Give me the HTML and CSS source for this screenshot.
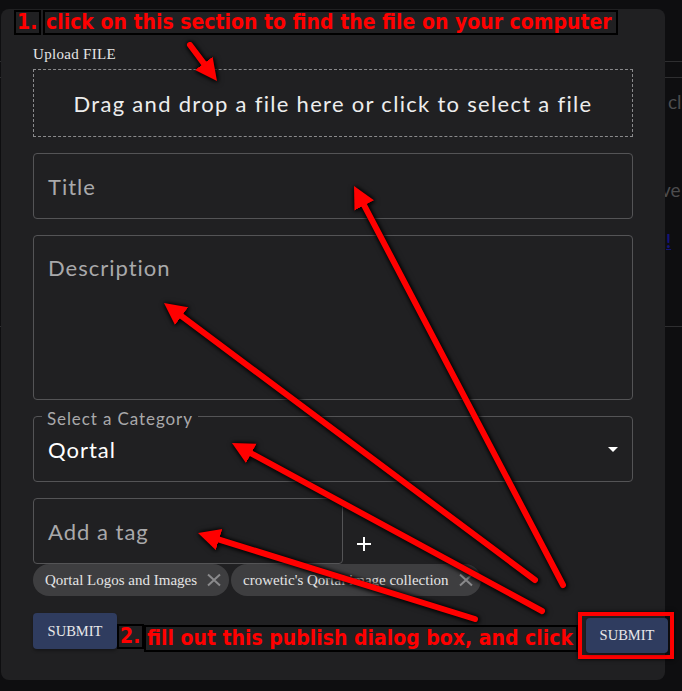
FILE: index.html
```html
<!DOCTYPE html>
<html lang="en">
<head>
<meta charset="utf-8">
<title>Publish</title>
<link rel="stylesheet" href="styles.css">
</head>
<body>
<div class="page">
  <div class="page-bar"></div>
  <div class="page-body">
    <p class="page-t1">cl</p>
    <p class="page-t2">ve</p>
    <a class="page-link" href="#">!</a>
  </div>
  <div class="page-rule"></div>
</div>

<div class="dialog">
  <label class="upload-label">Upload FILE</label>
  <div class="dropzone">Drag and drop a file here or click to select a file</div>
  <div class="field field-title"><span class="placeholder">Title</span></div>
  <div class="field field-desc"><span class="placeholder">Description</span></div>
  <div class="field field-select">
    <span class="legend">Select a Category</span>
    <span class="value">Qortal</span>
    <svg class="caret" width="10" height="5" viewBox="0 0 10 5"><path d="M0 0 L10 0 L5 5 Z" fill="#fff"/></svg>
  </div>
  <div class="tag-row">
    <div class="field field-tag"><span class="placeholder">Add a tag</span></div>
    <button class="add-btn" type="button">
      <svg width="14" height="14" viewBox="0 0 14 14"><path d="M7 0 V14 M0 7 H14" stroke="#fff" stroke-width="2"/></svg>
    </button>
  </div>
  <div class="chips">
    <span class="chip"><span class="chip-label">Qortal Logos and Images</span><svg class="chip-x" width="22" height="22" viewBox="0 0 22 22"><path d="M5 5.5 L17 16.5 M17 5.5 L5 16.5" stroke="#8a8a8c" stroke-width="2"/></svg></span>
    <span class="chip"><span class="chip-label">crowetic's Qortal image collection</span><svg class="chip-x" width="22" height="22" viewBox="0 0 22 22"><path d="M5 5.5 L17 16.5 M17 5.5 L5 16.5" stroke="#8a8a8c" stroke-width="2"/></svg></span>
  </div>
  <div class="actions"><button class="submit" type="button">SUBMIT</button></div>
</div>

<div class="note note-top">
  <span class="note-box note-num">1.</span>
  <span class="note-box note-text">click on this section to find the file on your computer</span>
</div>
<div class="note note-bottom">
  <span class="note-box note-num">2.</span>
  <span class="note-box note-text">fill out this publish dialog box, and click</span>
</div>
<div class="highlight"><button class="submit submit-copy" type="button">SUBMIT</button></div>

<svg class="arrows" width="682" height="691" viewBox="0 0 682 691">
  <defs>
    <marker id="head" markerUnits="userSpaceOnUse" markerWidth="24" markerHeight="24" refX="10" refY="11" orient="auto">
      <path d="M0 0 L22 11 L0 22 Z" fill="#ff0000"/>
    </marker>
  </defs>
  <g stroke="#ff0000" stroke-width="6" stroke-linecap="round" fill="none">
    <line x1="190" y1="45" x2="209.8" y2="71.4" marker-end="url(#head)"/>
    <line x1="563" y1="585" x2="359.6" y2="196.6" marker-end="url(#head)"/>
    <line x1="535" y1="580" x2="173.6" y2="310.2" marker-end="url(#head)"/>
    <line x1="542" y1="611" x2="242.5" y2="448.7" marker-end="url(#head)"/>
    <line x1="475" y1="619" x2="209.5" y2="536.6" marker-end="url(#head)"/>
  </g>
</svg>
</body>
</html>
```

FILE: styles.css
```css
html, body {
  margin: 0;
  padding: 0;
}
body {
  width: 682px;
  height: 691px;
  overflow: hidden;
  position: relative;
  background: #0e0e10;
  font-family: Lato, "Open Sans", sans-serif;
}

/* background page */
.page {
  padding-top: 61px;
}
.page-bar {
  height: 15px;
  border-top: 1px solid #2e2e30;
  border-bottom: 1px solid #2e2e30;
}
.page-body {
  height: 248px;
  padding-left: 660px;
  display: flex;
  flex-direction: column;
}
.page-t1 {
  margin: 12px 0 0 8px;
  font-size: 19px;
  line-height: 24px;
  color: #4c4c4e;
}
.page-t2 {
  margin: 64px 0 0 1px;
  font-size: 19px;
  line-height: 24px;
  color: #4c4c4e;
}
.page-link {
  margin: 28px 0 0 6px;
  font-size: 18px;
  font-weight: bold;
  color: #14147a;
}
.page-rule {
  border-top: 1px solid #2e2e30;
}

/* dialog */
.dialog {
  position: absolute;
  left: 1px;
  top: 9px;
  width: 664px;
  height: 671px;
  box-sizing: border-box;
  background: #202022;
  border-radius: 8px;
  padding: 35px 32px 0 32px;
  display: flex;
  flex-direction: column;
}
.upload-label {
  font-family: "Liberation Serif", serif;
  font-size: 15px;
  line-height: 20px;
  letter-spacing: 0.3px;
  color: #e6e6e6;
  margin-bottom: 5px;
}
.dropzone {
  height: 68px;
  box-sizing: border-box;
  border: 1px dashed #8a8a8c;
  display: flex;
  align-items: center;
  justify-content: center;
  font-size: 22px;
  letter-spacing: 1.3px;
  color: #ededed;
}
.field {
  box-sizing: border-box;
  border: 1px solid #545456;
  border-radius: 4px;
  position: relative;
  display: flex;
  align-items: center;
  padding: 0 14px;
  font-size: 22px;
  letter-spacing: 1px;
}
.placeholder {
  color: #a9a9ab;
}
.field-title {
  margin-top: 16px;
  height: 66px;
}
.field-desc {
  margin-top: 16px;
  height: 165px;
  align-items: flex-start;
  padding-top: 18px;
}
.field-select {
  margin-top: 16px;
  height: 66px;
  justify-content: space-between;
}
.legend {
  position: absolute;
  left: 8px;
  top: -8px;
  padding: 0 5px;
  background: #202022;
  font-size: 17px;
  line-height: 20px;
  letter-spacing: 0.9px;
  color: #a9a9ab;
}
.value {
  color: #ffffff;
}
.caret {
  display: block;
}
.tag-row {
  margin-top: 16px;
  display: flex;
  align-items: flex-end;
}
.field-tag {
  width: 310px;
  height: 66px;
}
.add-btn {
  width: 40px;
  height: 40px;
  margin-left: 1px;
  padding: 0;
  border: 0;
  background: transparent;
  display: flex;
  align-items: center;
  justify-content: center;
}
.chips {
  display: flex;
  gap: 2px;
}
.chip {
  height: 32px;
  border-radius: 16px;
  background: #3e3e40;
  display: inline-flex;
  align-items: center;
  padding-left: 12px;
  font-family: "Liberation Serif", serif;
  font-size: 15px;
  color: #e4e4e4;
}
.chip-x {
  margin: 0 4px 0 6px;
  display: block;
}
.actions {
  margin-top: 17px;
  display: flex;
}
.submit {
  width: 84px;
  height: 36px;
  border: 0;
  border-radius: 4px;
  background: #2f3c5f;
  color: #e8e8ea;
  font-family: "Liberation Serif", serif;
  font-size: 14.5px;
  padding: 0;
  box-shadow: 0 2px 3px rgba(0,0,0,0.3);
}

/* annotations */
.note {
  position: absolute;
  display: flex;
  gap: 2px;
}
.note-top {
  left: 14px;
  top: 10px;
}
.note-bottom {
  left: 117px;
  top: 624px;
  gap: 0;
}
.note-box {
  box-sizing: border-box;
  height: 25px;
  border: 2px solid #000;
  color: #ff0000;
  font-family: "DejaVu Sans Condensed", "DejaVu Sans", sans-serif;
  font-stretch: condensed;
  font-weight: bold;
  font-size: 21px;
  line-height: 21px;
  padding: 0 1px;
  white-space: nowrap;
  overflow: hidden;
}
.note-top .note-num { width: 27px; }
.note-top .note-text { width: 575px; }
.note-bottom .note-num { width: 27px; }
.note-bottom .note-text { width: 434px; height: 27px; margin-top: 1px; line-height: 22px; }
.highlight {
  position: absolute;
  left: 578px;
  top: 612px;
  width: 96px;
  height: 47px;
  box-sizing: border-box;
  border: 4px solid #ff0000;
  padding: 2px 0 0 4px;
  box-shadow: 0 0 4px #000;
}
.submit-copy {
  width: 82px;
  height: 35px;
  display: block;
}
.arrows {
  position: absolute;
  left: 0;
  top: 0;
  filter: drop-shadow(0 0 2px #000) drop-shadow(1px 1px 2px rgba(0,0,0,0.8));
  pointer-events: none;
}
```
